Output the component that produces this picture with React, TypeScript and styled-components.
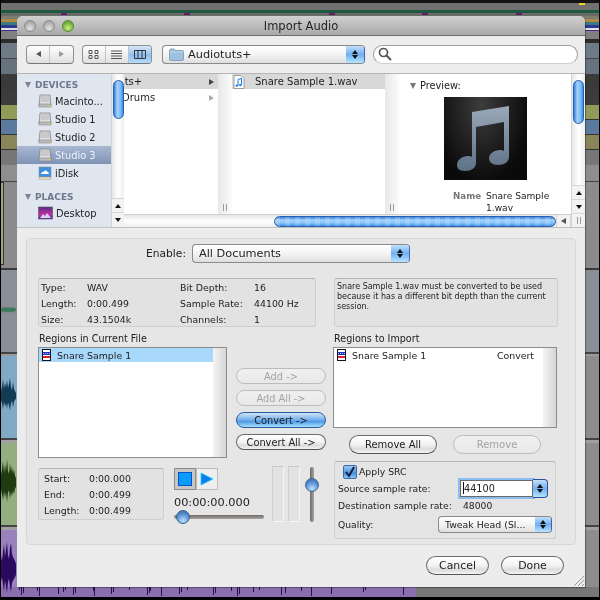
import * as React from 'react';
import styled, { createGlobalStyle, css } from 'styled-components';

const GlobalStyle = createGlobalStyle`
  * { box-sizing: border-box; }
  html, body { margin: 0; padding: 0; background: #000; }
  body { font-family: "DejaVu Sans", "Liberation Sans", sans-serif; font-size: 9.4px; color: #222; }
`;

const Screen = styled.div`
  position: relative;
  width: 600px;
  height: 600px;
  overflow: hidden;
  background: #000;
  filter: blur(0.35px);
`;

const Tracks = styled.div`
  display: flex;
  flex-direction: column;
  height: 600px;
  margin: 0 1px;
`;

const Track = styled.div<{ $h: number; $c: string; $r?: string }>`
  position: relative;
  flex: 0 0 ${({ $h }) => $h}px;
  background: ${({ $c, $r }) =>
    $r ? `linear-gradient(to right, ${$c} 0 415px, ${$r} 415px)` : $c};
`;

const Marker = styled.span<{ $x: number; $c: string }>`
  position: absolute;
  left: ${({ $x }) => $x}px;
  top: 0;
  width: 6px;
  height: 2px;
  background: ${({ $c }) => $c};
`;

const RegionClip = styled.span`
  position: absolute;
  left: 0;
  top: 0;
  width: 3px;
  height: 83px;
  background: #a3a08a;
  border: 1px solid #3a3a20;
  border-left: 0;
`;

const Wave = styled.svg`
  position: absolute;
  z-index: 1;
  left: 0;
  top: 0;
`;

const Dialog = styled.div`
  position: absolute;
  z-index: 2;
  left: 17px;
  top: 16px;
  width: 568px;
  height: 571px;
  display: flex;
  flex-direction: column;
  border-radius: 6px 6px 0 0;
  background: #ececec;
  box-shadow: 1px 1px 1px rgba(0, 0, 0, 0.35);
  overflow: hidden;
`;

const TitleBar = styled.div`
  position: relative;
  flex: 0 0 20px;
  display: flex;
  align-items: center;
  justify-content: center;
  padding-top: 1px;
  background: linear-gradient(#d0d0d0, #a8a8a8);
  border-bottom: 1px solid #6f6f6f;
  font-size: 11.5px;
  color: #262626;
`;

const Lights = styled.div`
  position: absolute;
  left: 7px;
  top: 4px;
  display: flex;
  gap: 7px;
`;

const Light = styled.span<{ $on?: boolean }>`
  width: 12px;
  height: 12px;
  border-radius: 50%;
  border: 1px solid ${({ $on }) => ($on ? '#5c8a30' : '#8c8c8c')};
  background: ${({ $on }) =>
    $on
      ? 'radial-gradient(circle at 50% 70%, #c8f080, #6aa83a 70%)'
      : 'radial-gradient(circle at 50% 75%, #e2e2e2, #a6a6a6 75%)'};
`;

const Toolbar = styled.div`
  flex: 0 0 38px;
  display: flex;
  align-items: center;
  padding: 0 7px 1px 9px;
  background: #ededed;
  border-bottom: 1px solid #b5b5b5;
`;

const Segmented = styled.div<{ $w: number; $ml?: number }>`
  display: flex;
  width: ${({ $w }) => $w}px;
  height: 19px;
  margin-left: ${({ $ml }) => $ml ?? 0}px;
  border: 1px solid #8f8f8f;
  border-bottom-color: #777;
  border-radius: 4px;
  overflow: hidden;
  background: linear-gradient(#fff, #ececec 60%, #e0e0e0);
`;

const Segment = styled.div<{ $on?: boolean }>`
  flex: 1;
  display: flex;
  align-items: center;
  justify-content: center;
  & + & { border-left: 1px solid #c4c4c4; }
  ${({ $on }) =>
    $on &&
    css`
      background: linear-gradient(#d6e8fa, #8fc0f0 55%, #b6dcfc);
    `}
`;

const Popup = styled.div<{ $w: number; $h?: number; $ml?: number; $fs?: number }>`
  display: flex;
  align-items: center;
  flex: 0 0 ${({ $w }) => $w}px;
  width: ${({ $w }) => $w}px;
  height: ${({ $h }) => $h ?? 19}px;
  margin-left: ${({ $ml }) => $ml ?? 0}px;
  padding-left: 6px;
  border: 1px solid #8a8a8a;
  border-right-color: #4068a8;
  border-radius: 4px;
  background: linear-gradient(#fff, #f4f4f4 50%, #dedede);
  font-size: ${({ $fs }) => $fs ?? 11.3}px;
  overflow: hidden;
`;

const PopupLabel = styled.span`
  flex: 1;
  display: flex;
  align-items: center;
  gap: 4px;
  white-space: nowrap;
`;

const Stepper = styled.span<{ $w?: number }>`
  flex: 0 0 ${({ $w }) => $w ?? 18}px;
  align-self: stretch;
  display: flex;
  flex-direction: column;
  align-items: center;
  justify-content: center;
  gap: 1px;
  background: linear-gradient(#c4dffa, #6fb0f2 50%, #b8e4ff);
`;

const StepUp = styled.i`
  width: 0;
  height: 0;
  border: 3px solid transparent;
  border-top: 0;
  border-bottom: 4px solid #111;
`;

const StepDown = styled.i`
  width: 0;
  height: 0;
  border: 3px solid transparent;
  border-bottom: 0;
  border-top: 4px solid #111;
`;

const SearchBox = styled.div`
  flex: 0 0 205px;
  height: 19px;
  margin-left: 8px;
  padding-left: 4px;
  display: flex;
  align-items: center;
  background: #fff;
  border: 1px solid #a0a0a0;
  border-bottom-color: #d0d0d0;
  border-radius: 10px;
`;

const Browser = styled.div`
  flex: 0 0 154px;
  display: flex;
  background: #fff;
  border-bottom: 1px solid #c0c0c0;
`;

const Sidebar = styled.div`
  flex: 0 0 94px;
  overflow: hidden;
  background: #dfe6f0;
  padding-top: 4px;
`;

const SideHead = styled.div<{ $mt?: number }>`
  display: flex;
  align-items: center;
  height: 14px;
  margin-top: ${({ $mt }) => $mt ?? 0}px;
  padding-left: 8px;
  gap: 4px;
  font-weight: 700;
  font-size: 9px;
  color: #6d7a8c;
`;

const DownTri = styled.i<{ $c?: string }>`
  width: 0;
  height: 0;
  border-left: 3.5px solid transparent;
  border-right: 3.5px solid transparent;
  border-top: 6px solid ${({ $c }) => $c ?? '#7a8492'};
`;

const SideRow = styled.div<{ $on?: boolean }>`
  display: flex;
  align-items: center;
  gap: 3px;
  height: 18px;
  padding-left: 21px;
  white-space: nowrap;
  color: ${({ $on }) => ($on ? '#eef2f8' : '#222')};
  font-size: 9.8px;
  ${({ $on }) =>
    $on &&
    css`
      background: linear-gradient(#a9b8d2, #7f93b6);
    `}
`;

const VScroll = styled.div<{ $w: number }>`
  flex: 0 0 ${({ $w }) => $w}px;
  display: flex;
  flex-direction: column;
  background: linear-gradient(to right, #e6e6e6, #fff 50%, #eee);
  border-left: 1px solid #d4d4d4;
`;

const VTrack = styled.div`
  flex: 1;
  padding: 6px 0 0 1px;
`;

const VThumb = styled.div<{ $h: number }>`
  width: 11px;
  height: ${({ $h }) => $h}px;
  border: 1px solid #2a5fae;
  border-radius: 6px;
  background: linear-gradient(to right, #2f7fe0, #a6d0fa 35%, #7cc0fa 70%, #3a8ce8);
`;

const ArrowBox = styled.div<{ $h?: number }>`
  flex: 0 0 ${({ $h }) => $h ?? 14}px;
  display: flex;
  align-items: center;
  justify-content: center;
  background: #f2f2f2;
  border-top: 1px solid #d8d8d8;
`;

const RightPane = styled.div`
  flex: 1;
  min-width: 0;
  display: flex;
  flex-direction: column;
`;

const Columns = styled.div`
  flex: 0 0 140px;
  display: flex;
  overflow: hidden;
`;

const FileColumn = styled.div<{ $w: number }>`
  position: relative;
  flex: 0 0 ${({ $w }) => $w}px;
  overflow: hidden;
`;

const Gutter = styled.div`
  flex: 0 0 14px;
  display: flex;
  align-items: flex-end;
  justify-content: center;
  padding-bottom: 3px;
  background: linear-gradient(to right, #e8e8e8, #fbfbfb);
`;

const Grip = styled.span`
  width: 4px;
  height: 7px;
  border-left: 1px solid #999;
  border-right: 1px solid #999;
`;

const FileRow = styled.div<{ $on?: boolean }>`
  display: flex;
  align-items: center;
  height: 15px;
  padding-right: 4px;
  padding-left: 1px;
  white-space: nowrap;
  font-size: 10px;
  ${({ $on }) => $on && 'background: #d8d8d8;'}
  & + & { margin-top: 1px; }
`;

const FileName = styled.span<{ $ml?: number }>`
  flex: 1;
  margin-left: ${({ $ml }) => $ml ?? 0}px;
  min-width: 0;
`;

const RightTri = styled.i<{ $c: string }>`
  flex: 0 0 auto;
  width: 0;
  height: 0;
  border-top: 3.5px solid transparent;
  border-bottom: 3.5px solid transparent;
  border-left: 5px solid ${({ $c }) => $c};
`;

const Preview = styled.div`
  flex: 0 0 173px;
  display: flex;
  flex-direction: column;
  padding-top: 6px;
`;

const PreviewHead = styled.div`
  display: flex;
  align-items: center;
  gap: 4px;
  padding-left: 11px;
  height: 11px;
  font-size: 9.8px;
`;

const Art = styled.div`
  width: 83px;
  height: 83px;
  margin: 6px 0 0 45px;
  background: radial-gradient(ellipse at 45% 10%, #3c3c3c, #0a0a0a 75%);
`;

const MetaRow = styled.div`
  display: grid;
  grid-template-columns: 30px 68px;
  column-gap: 3px;
  margin: 10px 0 0 54px;
  line-height: 12px;
  font-size: 9.1px;
`;

const MetaKey = styled.span`
  font-weight: 700;
  font-size: 8.7px;
  color: #777;
`;

const HScroll = styled.div`
  flex: 0 0 13px;
  display: flex;
  align-items: center;
  background: linear-gradient(#e6e6e6, #fff 50%, #eee);
  border-top: 1px solid #cfcfcf;
`;

const HTrack = styled.div`
  flex: 1;
  display: flex;
  padding-left: 150px;
`;

const HThumb = styled.div`
  width: 282px;
  height: 11px;
  border: 1px solid #2a5fae;
  border-radius: 6px;
  background:
    repeating-linear-gradient(to right, rgba(255, 255, 255, 0.16) 0 5px, transparent 5px 10px),
    linear-gradient(#2f7fe0, #a6d0fa 35%, #7cc0fa 70%, #3a8ce8);
`;

const HArrow = styled.div`
  flex: 0 0 14px;
  height: 100%;
  display: flex;
  align-items: center;
  justify-content: center;
  border-left: 1px solid #d8d8d8;
  background: #f2f2f2;
`;

const LeftTri = styled.i`
  width: 0;
  height: 0;
  border-top: 3.5px solid transparent;
  border-bottom: 3.5px solid transparent;
  border-right: 5px solid #555;
`;

const Lower = styled.div`
  flex: 1;
  display: flex;
  flex-direction: column;
  padding: 10px 9px 0;
  background: #ececec;
`;

const Panel = styled.div`
  flex: 0 0 307px;
  display: flex;
  flex-direction: column;
  padding: 5px 17px 0 11px;
  background: #e6e6e6;
  border: 1px solid #d6d6d6;
  border-radius: 4px;
`;

const EnableRow = styled.div`
  display: flex;
  align-items: center;
  height: 19px;
  padding-left: 108px;
  font-size: 10.7px;
`;

const EnableLabel = styled.span`
  width: 46px;
`;

const TopBoxes = styled.div`
  display: flex;
  margin-top: 15px;
`;

const Inset = styled.div`
  border: 1px solid #cfcfcf;
  border-top-color: #b4b4b4;
  border-radius: 3px;
  background: #e2e2e2;
`;

const InfoBox = styled(Inset)`
  flex: 0 0 278px;
  height: 49px;
  padding: 0 0 0 2px;
  display: grid;
  grid-template-columns: 46px 93px 74px 1fr;
  grid-auto-rows: 16px;
  align-items: center;
`;

const MessageBox = styled(Inset)`
  flex: 0 0 224px;
  height: 49px;
  margin-left: 18px;
  padding: 3px 2px;
  font-size: 8px;
  line-height: 10px;
`;

const Columns2 = styled.div`
  display: grid;
  grid-template-columns: 289px 225px;
  column-gap: 6px;
  margin-top: 5px;
`;

const Col = styled.div`
  display: flex;
  flex-direction: column;
`;

const SectionLabel = styled.div`
  height: 15px;
  line-height: 14px;
  padding-left: 1px;
  font-size: 9.6px;
`;

const ListRow = styled.div`
  display: flex;
`;

const ListBox = styled.div<{ $w: number; $h: number }>`
  flex: none;
  width: ${({ $w }) => $w}px;
  height: ${({ $h }) => $h}px;
  display: flex;
  border: 1px solid #8c8c8c;
  background: #fff;
`;

const ListBody = styled.div`
  flex: 1;
  min-width: 0;
`;

const ListEdge = styled.div`
  flex: 0 0 13px;
  background: linear-gradient(to right, #f4f4f4, #d6d6d6);
`;

const ListItem = styled.div<{ $on?: boolean }>`
  display: flex;
  align-items: center;
  gap: 6px;
  height: 14px;
  padding-left: 3px;
  padding-right: 9px;
  ${({ $on }) => $on && 'background: #a8d8fc;'}
`;

const ItemName = styled.span`
  flex: 1;
`;

const MidButtons = styled.div`
  flex: 0 0 90px;
  margin-left: 9px;
  padding-top: 21px;
  display: flex;
  flex-direction: column;
  gap: 6px;
`;

const AquaButton = styled.div<{ $kind?: 'blue' | 'off'; $h?: number; $w?: number; $fs?: number }>`
  display: flex;
  align-items: center;
  justify-content: center;
  width: ${({ $w }) => ($w ? `${$w}px` : 'auto')};
  height: ${({ $h }) => $h ?? 16}px;
  border-radius: 10px;
  font-size: ${({ $fs }) => $fs ?? 9.8}px;
  border: 1px solid #6c6c6c;
  border-bottom-color: #555;
  background: linear-gradient(#fff, #f2f2f2 50%, #dcdcdc 75%, #f4f4f4);
  color: #1c1c1c;
  ${({ $kind }) =>
    $kind === 'blue' &&
    css`
      border-color: #2a5a9c;
      background: linear-gradient(#cfe4fa, #73aeea 50%, #4f9ae8 60%, #a6e0fc);
    `}
  ${({ $kind }) =>
    $kind === 'off' &&
    css`
      border-color: #bcbcbc;
      background: linear-gradient(#f0f0f0, #e8e8e8);
      color: #a4a4a4;
    `}
`;

const BottomLeft = styled.div`
  display: flex;
  align-items: flex-start;
  margin-top: 10px;
`;

const TimeBox = styled(Inset)`
  flex: 0 0 126px;
  height: 52px;
  padding: 1px 0 0 5px;
  display: grid;
  grid-template-columns: 45px 1fr;
  grid-auto-rows: 16px;
  align-items: center;
`;

const Transport = styled.div`
  flex: 0 0 90px;
  margin-left: 10px;
`;

const TransportButtons = styled.div`
  display: flex;
`;

const TransportButton = styled.div<{ $pressed?: boolean }>`
  width: 22px;
  height: 22px;
  display: flex;
  align-items: center;
  justify-content: center;
  border: 1px solid #bdbdbd;
  background: ${({ $pressed }) => ($pressed ? '#c6c6c6' : '#eeeeee')};
  ${({ $pressed }) => $pressed && 'border-color: #8c8c8c;'}
`;

const Counter = styled.div`
  margin-top: 5px;
  height: 15px;
  line-height: 15px;
  font-size: 11.3px;
`;

const HSlider = styled.div`
  position: relative;
  margin-top: 5px;
  height: 4px;
  border-radius: 2px;
  background: linear-gradient(#6e6a66, #a8a4a0);
`;

const Knob = styled.span<{ $x: number; $y: number }>`
  position: absolute;
  left: ${({ $x }) => $x}px;
  top: ${({ $y }) => $y}px;
  width: 14px;
  height: 14px;
  border-radius: 50%;
  border: 1px solid #3c6494;
  background: radial-gradient(circle at 50% 80%, #bfe0fc, #5a92d4 55%, #37659f);
`;

const Meter = styled.div<{ $ml: number }>`
  flex: 0 0 12px;
  height: 56px;
  margin: -2px 0 0 ${({ $ml }) => $ml}px;
  background: #e2e2e2;
  border: 1px solid #f6f6f6;
  border-top-color: #c8c8c8;
  border-left-color: #d0d0d0;
`;

const VSlider = styled.div`
  position: relative;
  flex: 0 0 4px;
  height: 55px;
  margin: -1px 0 0 10px;
  border-radius: 2px;
  background: linear-gradient(to right, #6e6a66, #a8a4a0);
`;

const RemoveRow = styled.div`
  display: flex;
  gap: 16px;
  margin: 7px 0 0 16px;
`;

const SrcBox = styled(Inset)`
  flex: none;
  width: 222px;
  height: 78px;
  margin: 7px 0 0 1px;
  padding: 2px 3px 0 3px;
  display: flex;
  flex-direction: column;
  font-size: 9.2px;
  background: #e4e4e4;
`;

const CheckLine = styled.div`
  display: flex;
  align-items: center;
  gap: 2px;
  height: 15px;
  padding-left: 5px;
  font-size: 9.3px;
`;

const CheckMark = styled.span`
  width: 14px;
  height: 14px;
  display: flex;
  align-items: center;
  justify-content: center;
  border: 1px solid #3c6aa8;
  border-radius: 2px;
  background: linear-gradient(#9cc6f4, #4a8fdc 60%, #8cc8f8);
`;

const SrcRow = styled.div<{ $h: number; $mt?: number }>`
  display: flex;
  align-items: center;
  height: ${({ $h }) => $h}px;
  margin-top: ${({ $mt }) => $mt ?? 0}px;
`;

const SrcKey = styled.span<{ $w: number }>`
  flex: 0 0 ${({ $w }) => $w}px;
`;

const RateField = styled.div`
  flex: 0 0 73px;
  height: 17px;
  display: flex;
  align-items: center;
  padding-left: 2px;
  background: #fff;
  border: 1px solid #6a6a6a;
  box-shadow: 0 0 0 2px #8cbcf0;
  font-size: 9.7px;
`;

const Caret = styled.i`
  width: 1px;
  height: 12px;
  background: #111;
`;

const RateStepper = styled(Stepper)`
  flex: 0 0 15px;
  height: 19px;
  align-self: center;
  border: 1px solid #2a4f9c;
  border-left: 0;
  border-radius: 0 4px 4px 0;
`;

const Footer = styled.div`
  display: flex;
  justify-content: flex-end;
  gap: 12px;
  margin-top: 11px;
  padding-right: 12px;
`;

const ResizeCorner = styled.svg`
  position: absolute;
  right: 1px;
  bottom: 1px;
`;

function DriveIcon() {
  return (
    <svg width="14" height="14" viewBox="0 0 14 14">
      <path d="M2 1h10l1 11H1z" fill="#dedede" stroke="#777" strokeWidth="0.7" />
      <path d="M2.5 3h9M2.5 5h9M2.5 7h9" stroke="#a4a4a4" strokeWidth="0.7" />
      <rect x="1" y="10" width="12" height="3" fill="#bcbcbc" stroke="#808080" strokeWidth="0.5" />
      <rect x="10.5" y="11" width="2" height="1" fill="#e0d040" />
    </svg>
  );
}

function DiskIcon() {
  return (
    <svg width="14" height="14" viewBox="0 0 14 14">
      <rect x="1" y="1" width="12" height="10" fill="#3f8fdc" stroke="#8a8a8a" strokeWidth="0.5" />
      <path d="M3 8c0-2 2-2 2.500-2 .5-2 3.500-2 4 0 1.500 0 1.500 2 1 2z" fill="#fff" />
      <rect x="1" y="11" width="12" height="2.500" fill="#e4dcb4" stroke="#999" strokeWidth="0.4" />
    </svg>
  );
}

function DesktopIcon() {
  return (
    <svg width="15" height="14" viewBox="0 0 15 14">
      <defs>
        <linearGradient id="dsk" x1="0" y1="0" x2="0" y2="1">
          <stop offset="0" stopColor="#5a2c8c" />
          <stop offset="0.6" stopColor="#c02ca0" />
          <stop offset="1" stopColor="#50309c" />
        </linearGradient>
      </defs>
      <rect x="0.500" y="1" width="14" height="12" fill="url(#dsk)" stroke="#555" strokeWidth="0.6" />
      <path d="M2 12l3-4 2 2 2-3 4 5z" fill="#d8d0f0" />
    </svg>
  );
}

function FolderIcon() {
  return (
    <svg width="15" height="13" viewBox="0 0 15 13">
      <path d="M.5 2.500c0-1 .5-1.500 1.500-1.500h3l1 1.500h7.500c.5 0 1 .5 1 1v8c0 .5-.5 1-1 1H1.500c-.5 0-1-.5-1-1z" fill="#9cc0de" stroke="#6a8eae" strokeWidth="0.7" />
      <path d="M1 4h13" stroke="#c8e0f0" strokeWidth="0.8" />
    </svg>
  );
}

function AudioFileIcon() {
  return (
    <svg width="12" height="14" viewBox="0 0 12 14">
      <path d="M1 .5h7l3 3v10H1z" fill="#fff" stroke="#888" strokeWidth="0.8" />
      <path d="M5 4.500l3.500-1v6.500M5 4.500V10.500" stroke="#2a80e0" strokeWidth="1.100" fill="none" />
      <ellipse cx="3.800" cy="10.700" rx="1.400" ry="1.100" fill="#2a80e0" />
      <ellipse cx="7.300" cy="10.200" rx="1.400" ry="1.100" fill="#2a80e0" />
    </svg>
  );
}

function RegionIcon() {
  return (
    <svg width="9" height="12" viewBox="0 0 9 12" style={{ flex: '0 0 auto' }}>
      <rect x="0.500" y="0.500" width="8" height="11" fill="#fff" stroke="#111" />
      <rect x="1" y="3" width="7" height="3" fill="#2036c8" />
      <path d="M1 4.500h7" stroke="#fff" strokeWidth="0.600" strokeDasharray="1 1" />
      <rect x="1" y="7" width="7" height="2" fill="#d8202c" />
    </svg>
  );
}

function MusicArt() {
  return (
    <svg width="83" height="83" viewBox="0 0 83 83">
      <defs>
        <linearGradient id="note" x1="0" y1="0" x2="0" y2="1">
          <stop offset="0" stopColor="#9aa8b8" />
          <stop offset="1" stopColor="#5e7186" />
        </linearGradient>
      </defs>
      <path
        d="M28 15L65 9V60C65 65 60 68 54 68C48 68 45 65 45 61C45 57 50 53 56 53C58 53 59.500 53.500 60 54V25L32 30V66C32 71 27 74 21 74C15 74 13 71 13 68C13 63 18 59 24 59C26 59 27.500 59.500 28 60Z"
        fill="url(#note)"
      />
    </svg>
  );
}

function SearchIcon() {
  return (
    <svg width="14" height="14" viewBox="0 0 14 14">
      <circle cx="5.500" cy="5.500" r="4" fill="none" stroke="#555" strokeWidth="1.700" />
      <path d="M8.500 8.500L13 13" stroke="#555" strokeWidth="2" />
    </svg>
  );
}

function WaveSliver(props: { h: number; mid: number; c: string; rows: number[] }) {
  const { h, mid, c, rows } = props;
  const points = rows
    .map((w, i) => `${i},${mid - w}`)
    .concat(rows.map((w, i) => `${i},${mid + w * 0.8}`).reverse())
    .join(' ');
  return (
    <Wave width="16" height={h}>
      <polygon points={points} fill={c} />
    </Wave>
  );
}

function BottomSpikes() {
  const spikes = [
    18, 20, 22, 36, 38, 57, 62, 64, 72, 74, 92, 93, 110, 112, 128, 146, 148, 149, 160, 178, 180, 186,
    212, 214, 230, 236, 238, 252, 258, 280, 284, 300, 310, 330, 362, 364, 402,
  ];
  return (
    <Wave width="415" height="10">
      {spikes.map((x, i) => (
        <rect key={x} x={x} y="0" width="1" height={3 + ((i * 5) % 7)} fill="#2a1050" />
      ))}
    </Wave>
  );
}

const pageTracks: { h: number; c: string; r?: string }[] = [
  { h: 3, c: '#141414' },
  { h: 7, c: '#707070' },
  { h: 3, c: '#1e5a40' },
  { h: 3, c: '#6a6a6a' },
  { h: 3, c: '#7c7c70' },
  { h: 3, c: '#b08a40' },
  { h: 3, c: '#3a7a80' },
  { h: 3, c: '#2a3a90' },
  { h: 2, c: '#e0e0e0' },
  { h: 1, c: '#4a2a90' },
  { h: 8, c: '#808080' },
  { h: 4, c: '#2c2c2c' },
  { h: 15, c: '#6e7a86' },
  { h: 1, c: '#444' },
  { h: 15, c: '#66727e' },
  { h: 16, c: '#3a3a3a' },
  { h: 15, c: '#3c3c3c' },
  { h: 14, c: '#8f9b56' },
  { h: 1, c: '#333' },
  { h: 14, c: '#5b7a9e' },
  { h: 1, c: '#333' },
  { h: 14, c: '#8a8558' },
  { h: 1, c: '#333' },
  { h: 15, c: '#777' },
  { h: 16, c: '#8e8e8e' },
  { h: 1, c: '#444' },
];

export default function App() {
  const blueRows = [5, 9, 17, 7, 13, 9, 16, 8, 12, 18, 9, 6, 14, 7, 5, 3];
  const greenRows = [8, 14, 22, 10, 19, 11, 24, 12, 9, 20, 11, 17, 9, 14, 7, 5];
  const purpleRows = [14, 9, 18, 26, 13, 21, 28, 15, 11, 22, 27, 16, 13, 11, 9, 6];
  const thinRows = [1, 2, 3, 2, 3, 2, 3, 2, 3, 2, 3, 2, 3, 2, 2, 1];

  return (
    <Screen>
      <GlobalStyle />
      <Tracks>
        {pageTracks.map((t, i) => (
          <Track key={i} $h={t.h} $c={t.c}>
            {i === 1 && <Marker $x={578} $c="#f0d020" />}
            {i === 3 && (
              <>
                <Marker $x={60} $c="#6a1a6a" />
                <Marker $x={183} $c="#6a1a6a" />
                <Marker $x={328} $c="#6a1a6a" />
                <Marker $x={421} $c="#6a1a6a" />
                <Marker $x={515} $c="#6a1a6a" />
              </>
            )}
          </Track>
        ))}
        <Track $h={86} $c="#8b8b8b">
          <RegionClip />
        </Track>
        <Track $h={2} $c="#3a3a3a" />
        <Track $h={82} $c="#8a8e98">
          <WaveSliver h={82} mid={40} c="#3f7a5c" rows={thinRows} />
        </Track>
        <Track $h={2} $c="#444" />
        <Track $h={2} $c="#9a9a9a" />
        <Track $h={82} $c="#7fa9c4" $r="#8d8d8d">
          <WaveSliver h={82} mid={40} c="#123c54" rows={blueRows} />
        </Track>
        <Track $h={2} $c="#444" />
        <Track $h={3} $c="#a0a0a0" />
        <Track $h={82} $c="#94ae80" $r="#8d8d8d">
          <WaveSliver h={82} mid={40} c="#1e3c10" rows={greenRows} />
        </Track>
        <Track $h={2} $c="#444" />
        <Track $h={3} $c="#a0a0a0" />
        <Track $h={57} $c="#9a80bc" $r="#8d8d8d">
          <WaveSliver h={70} mid={40} c="#2a0a60" rows={purpleRows} />
        </Track>
        <Track $h={10} $c="#8a6eae" $r="#777">
          <BottomSpikes />
        </Track>
      </Tracks>

      <Dialog>
        <TitleBar>
          <Lights>
            <Light />
            <Light />
            <Light $on />
          </Lights>
          Import Audio
        </TitleBar>

        <Toolbar>
          <Segmented $w={48}>
            <Segment>
              <LeftTri />
            </Segment>
            <Segment>
              <RightTri $c="#9a9a9a" />
            </Segment>
          </Segmented>
          <Segmented $w={71} $ml={8}>
            <Segment>
              <svg width="11" height="9" viewBox="0 0 11 9">
                <path d="M1 .5h3v3H1zM7 .5h3v3H7zM1 5.500h3v3H1zM7 5.500h3v3H7z" fill="none" stroke="#555" />
              </svg>
            </Segment>
            <Segment>
              <svg width="11" height="9" viewBox="0 0 11 9">
                <path d="M0 1h11M0 3.500h11M0 6h11M0 8.500h11" stroke="#555" />
              </svg>
            </Segment>
            <Segment $on>
              <svg width="12" height="9" viewBox="0 0 12 9">
                <path d="M.5.500h11v8H.5zM4 .5v8M8 .5v8" fill="none" stroke="#333" />
              </svg>
            </Segment>
          </Segmented>
          <Popup $w={203} $ml={10}>
            <PopupLabel>
              <FolderIcon />
              Audiotuts+
            </PopupLabel>
            <Stepper>
              <StepUp />
              <StepDown />
            </Stepper>
          </Popup>
          <SearchBox>
            <SearchIcon />
          </SearchBox>
        </Toolbar>

        <Browser>
          <Sidebar>
            <SideHead>
              <DownTri />
              DEVICES
            </SideHead>
            <SideRow>
              <DriveIcon />
              Macinto...
            </SideRow>
            <SideRow>
              <DriveIcon />
              Studio 1
            </SideRow>
            <SideRow>
              <DriveIcon />
              Studio 2
            </SideRow>
            <SideRow $on>
              <DriveIcon />
              Studio 3
            </SideRow>
            <SideRow>
              <DiskIcon />
              iDisk
            </SideRow>
            <SideHead $mt={8}>
              <DownTri />
              PLACES
            </SideHead>
            <SideRow>
              <DesktopIcon />
              Desktop
            </SideRow>
          </Sidebar>
          <VScroll $w={13}>
            <VTrack>
              <VThumb $h={39} />
            </VTrack>
            <ArrowBox>
              <StepUp />
            </ArrowBox>
            <ArrowBox $h={15}>
              <StepDown />
            </ArrowBox>
          </VScroll>

          <RightPane>
            <Columns>
              <FileColumn $w={94}>
                <FileRow $on>
                  <FileName $ml={-39}>Audiotuts+</FileName>
                  <RightTri $c="#444" />
                </FileRow>
                <FileRow>
                  <FileName $ml={-3}>Drums</FileName>
                  <RightTri $c="#aaa" />
                </FileRow>
              </FileColumn>
              <Gutter>
                <Grip />
              </Gutter>
              <FileColumn $w={153}>
                <FileRow $on>
                  <AudioFileIcon />
                  <FileName $ml={10}>Snare Sample 1.wav</FileName>
                </FileRow>
              </FileColumn>
              <Gutter>
                <Grip />
              </Gutter>
              <Preview>
                <PreviewHead>
                  <DownTri $c="#777" />
                  <span>Preview:</span>
                </PreviewHead>
                <Art>
                  <MusicArt />
                </Art>
                <MetaRow>
                  <MetaKey>Name</MetaKey>
                  <span>Snare Sample 1.wav</span>
                </MetaRow>
              </Preview>
            </Columns>
            <HScroll>
              <HTrack>
                <HThumb />
              </HTrack>
              <HArrow>
                <LeftTri />
              </HArrow>
              <HArrow>
                <RightTri $c="#555" />
              </HArrow>
            </HScroll>
          </RightPane>

          <VScroll $w={14}>
            <VTrack>
              <VThumb $h={44} />
            </VTrack>
            <ArrowBox>
              <StepUp />
            </ArrowBox>
            <ArrowBox>
              <StepDown />
            </ArrowBox>
            <ArrowBox>
              <Grip />
            </ArrowBox>
          </VScroll>
        </Browser>

        <Lower>
          <Panel>
            <EnableRow>
              <EnableLabel>Enable:</EnableLabel>
              <Popup $w={218}>
                <PopupLabel>All Documents</PopupLabel>
                <Stepper>
                  <StepUp />
                  <StepDown />
                </Stepper>
              </Popup>
            </EnableRow>

            <TopBoxes>
              <InfoBox>
                <span>Type:</span>
                <span>WAV</span>
                <span>Bit Depth:</span>
                <span>16</span>
                <span>Length:</span>
                <span>0:00.499</span>
                <span>Sample Rate:</span>
                <span>44100 Hz</span>
                <span>Size:</span>
                <span>43.1504k</span>
                <span>Channels:</span>
                <span>1</span>
              </InfoBox>
              <MessageBox>
                Snare Sample 1.wav must be converted to be used because it has a different bit depth than
                the current session.
              </MessageBox>
            </TopBoxes>

            <Columns2>
              <Col>
                <SectionLabel>Regions in Current File</SectionLabel>
                <ListRow>
                  <ListBox $w={189} $h={111}>
                    <ListBody>
                      <ListItem $on>
                        <RegionIcon />
                        <ItemName>Snare Sample 1</ItemName>
                      </ListItem>
                    </ListBody>
                    <ListEdge />
                  </ListBox>
                  <MidButtons>
                    <AquaButton $kind="off">Add -&gt;</AquaButton>
                    <AquaButton $kind="off">Add All -&gt;</AquaButton>
                    <AquaButton $kind="blue">Convert -&gt;</AquaButton>
                    <AquaButton>Convert All -&gt;</AquaButton>
                  </MidButtons>
                </ListRow>
                <BottomLeft>
                  <TimeBox>
                    <span>Start:</span>
                    <span>0:00.000</span>
                    <span>End:</span>
                    <span>0:00.499</span>
                    <span>Length:</span>
                    <span>0:00.499</span>
                  </TimeBox>
                  <Transport>
                    <TransportButtons>
                      <TransportButton $pressed>
                        <svg width="14" height="14" viewBox="0 0 14 14">
                          <rect x="0.500" y="0.500" width="13" height="13" fill="#0a9cf8" stroke="#0a50c8" />
                        </svg>
                      </TransportButton>
                      <TransportButton>
                        <svg width="14" height="14" viewBox="0 0 14 14">
                          <path d="M1 1l12 6-12 6z" fill="#0a80f0" stroke="#20d0ff" strokeWidth="0.8" />
                        </svg>
                      </TransportButton>
                    </TransportButtons>
                    <Counter>00:00:00.000</Counter>
                    <HSlider>
                      <Knob $x={2} $y={-5} />
                    </HSlider>
                  </Transport>
                  <Meter $ml={8} />
                  <Meter $ml={4} />
                  <VSlider>
                    <Knob $x={-5} $y={11} />
                  </VSlider>
                </BottomLeft>
              </Col>

              <Col>
                <SectionLabel>Regions to Import</SectionLabel>
                <ListBox $w={224} $h={81}>
                  <ListBody>
                    <ListItem>
                      <RegionIcon />
                      <ItemName>Snare Sample 1</ItemName>
                      <span>Convert</span>
                    </ListItem>
                  </ListBody>
                  <ListEdge />
                </ListBox>
                <RemoveRow>
                  <AquaButton $w={88} $h={19} $fs={10}>
                    Remove All
                  </AquaButton>
                  <AquaButton $w={88} $h={19} $fs={10} $kind="off">
                    Remove
                  </AquaButton>
                </RemoveRow>
                <SrcBox>
                  <CheckLine>
                    <CheckMark>
                      <svg width="12" height="12" viewBox="0 0 12 12">
                        <path d="M2 6l3 4 5-9" fill="none" stroke="#102040" strokeWidth="2" />
                      </svg>
                    </CheckMark>
                    Apply SRC
                  </CheckLine>
                  <SrcRow $h={18}>
                    <SrcKey $w={122}>Source sample rate:</SrcKey>
                    <RateField>
                      <Caret />
                      44100
                    </RateField>
                    <RateStepper>
                      <StepUp />
                      <StepDown />
                    </RateStepper>
                  </SrcRow>
                  <SrcRow $h={16}>
                    <SrcKey $w={125}>Destination sample rate:</SrcKey>
                    <span>48000</span>
                  </SrcRow>
                  <SrcRow $h={17} $mt={3}>
                    <SrcKey $w={100}>Quality:</SrcKey>
                    <Popup $w={114} $h={17} $fs={9.4}>
                      <PopupLabel>Tweak Head (Sl...</PopupLabel>
                      <Stepper $w={16}>
                        <StepUp />
                        <StepDown />
                      </Stepper>
                    </Popup>
                  </SrcRow>
                </SrcBox>
              </Col>
            </Columns2>
          </Panel>

          <Footer>
            <AquaButton $w={63} $h={19} $fs={10.9}>
              Cancel
            </AquaButton>
            <AquaButton $w={63} $h={19} $fs={10.9}>
              Done
            </AquaButton>
          </Footer>
        </Lower>

        <ResizeCorner width="10" height="10" viewBox="0 0 10 10">
          <path d="M0 10L10 0M4 10L10 4M8 10L10 8" stroke="#999" />
        </ResizeCorner>
      </Dialog>
    </Screen>
  );
}
